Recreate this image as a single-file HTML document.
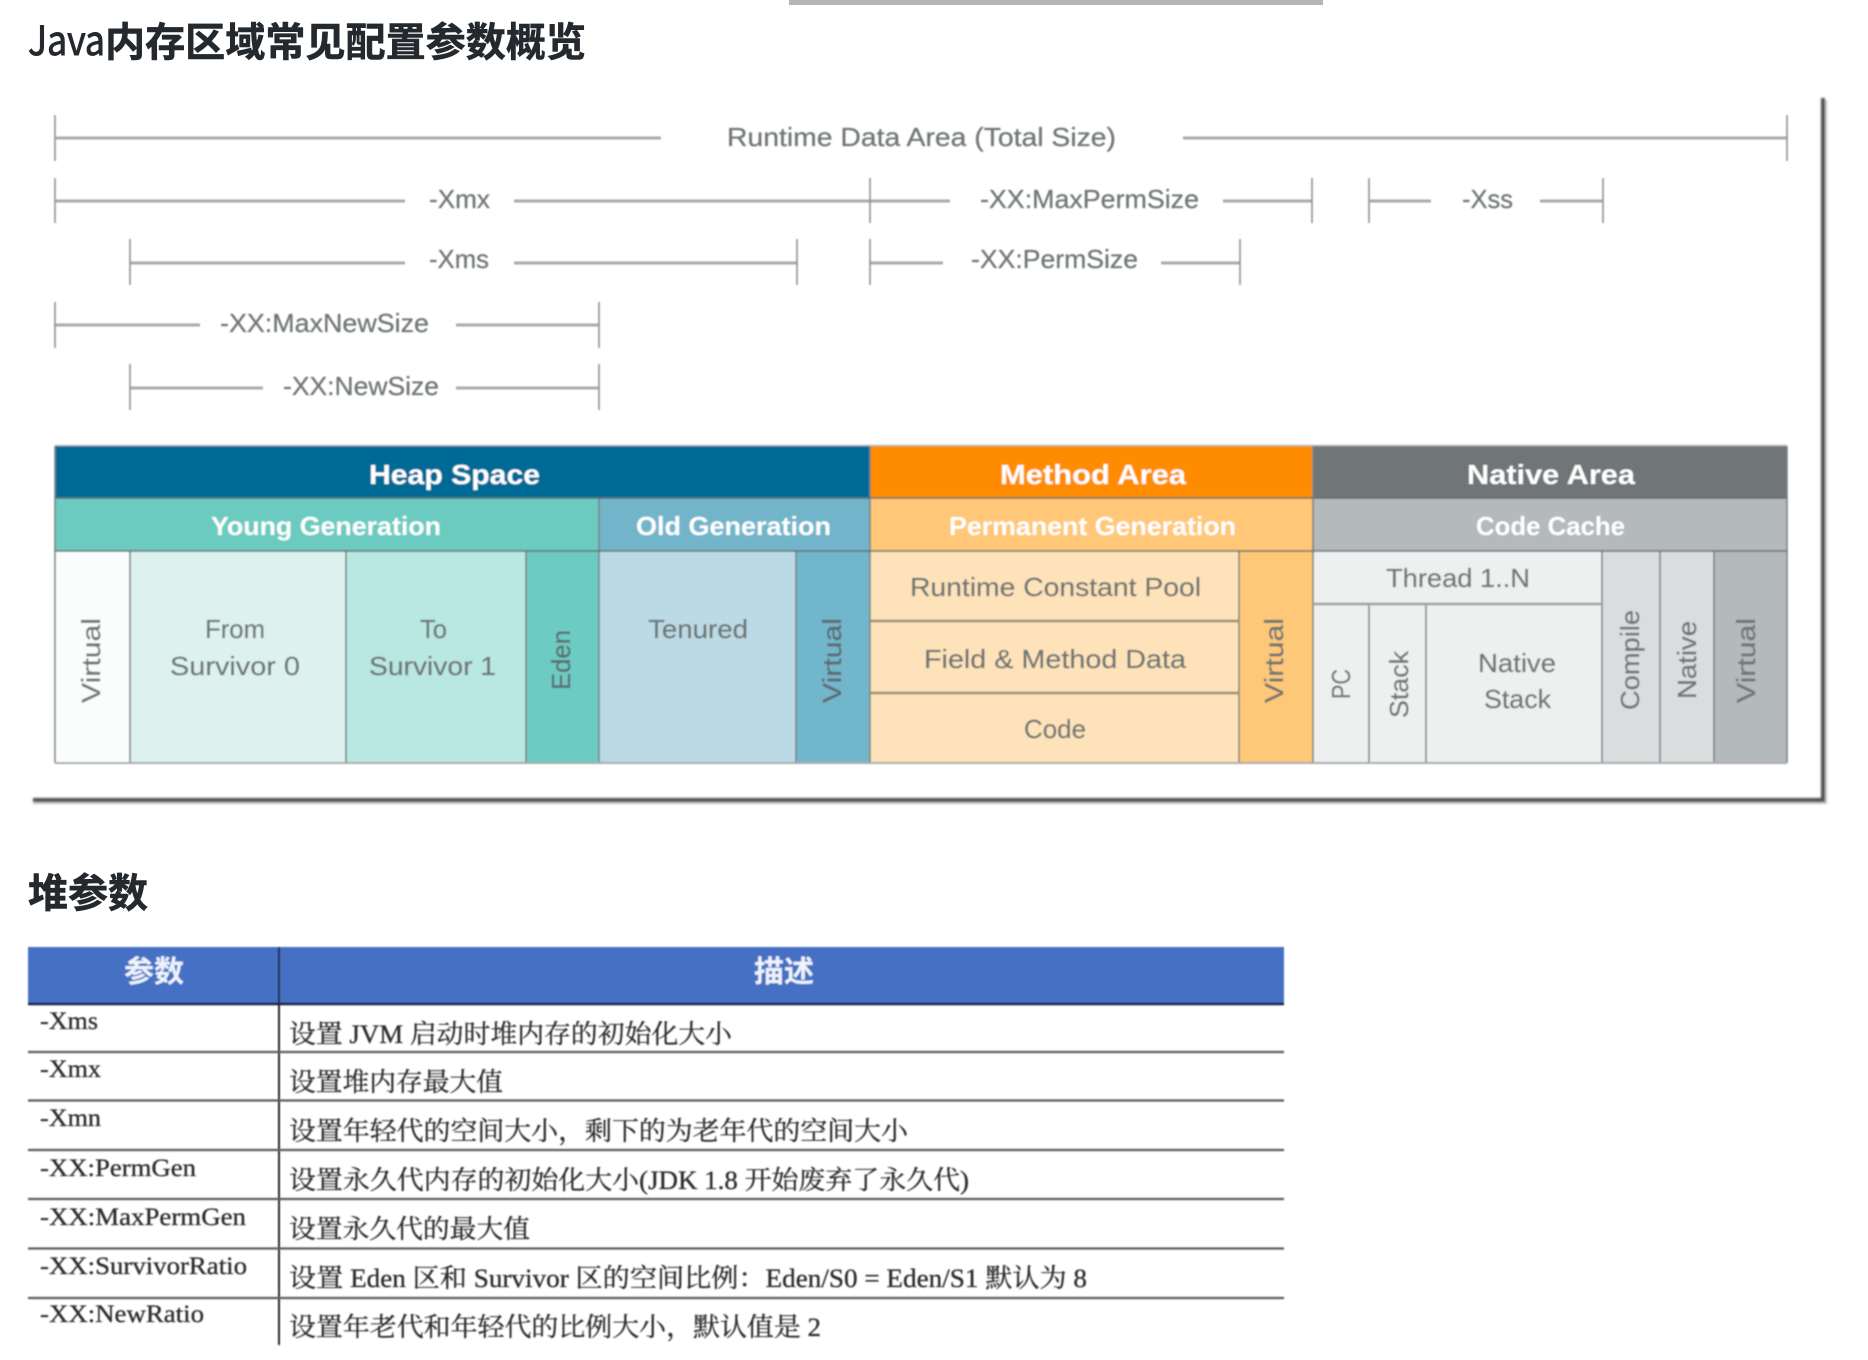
<!DOCTYPE html>
<html lang="zh">
<head>
<meta charset="utf-8">
<title>Java内存区域常见配置参数概览</title>
<style>
html,body{margin:0;padding:0;background:#fff;width:1868px;height:1360px;overflow:hidden}
svg{display:block;position:absolute;left:0;top:0}
.h{font-family:"Noto Sans CJK SC","Liberation Sans",sans-serif;font-weight:700;fill:#24292e;stroke:#24292e;stroke-width:.6px}
.d text{font-family:"Liberation Sans",sans-serif;font-size:26px;fill:#6f7575;stroke:#6f7575;stroke-width:.25px}
.d text.w{font-weight:700;fill:#fff;stroke:none;font-size:28px}
.d text.w2{font-weight:700;fill:#fff;stroke:none;font-size:26px}
.d text.dk{fill:#5f6b6e;stroke:#5f6b6e}
.t text{font-family:"Liberation Serif","Noto Serif CJK SC",serif;fill:#2a2a2a;stroke:#2a2a2a;stroke-width:.3px}
.t text.c1{font-size:25px}
.t text.c2{font-size:26px;font-family:"Liberation Serif","Noto Serif CJK SC",serif}
.t text.hd{font-family:"Noto Sans CJK SC",sans-serif;font-weight:700;font-size:30px;fill:#eef3fb;stroke:none}
</style>
</head>
<body>
<svg width="1868" height="1360" viewBox="0 0 1868 1360" xmlns="http://www.w3.org/2000/svg">
<defs>
<filter id="b" x="-2%" y="-2%" width="104%" height="104%"><feGaussianBlur stdDeviation="0.7"/></filter>
<filter id="s" x="-5%" y="-5%" width="110%" height="110%"><feGaussianBlur stdDeviation="1.1"/></filter>
</defs>
<rect x="789" y="0" width="534" height="5" fill="#b5b5b7"/>
<text class="h" x="28" y="55" font-size="40" style="font-weight:400;stroke-width:.9px" textLength="77" lengthAdjust="spacingAndGlyphs">Java</text>
<text class="h" x="105" y="56" font-size="40" textLength="481" lengthAdjust="spacingAndGlyphs">内存区域常见配置参数概览</text>
<text class="h" x="28" y="907" font-size="40" textLength="120" lengthAdjust="spacingAndGlyphs">堆参数</text>

<g filter="url(#s)">
<path d="M1823 98V800H33" fill="none" stroke="#4a4d4f" stroke-width="4"/>
<path d="M1826 100V803H33" fill="none" stroke="#c4c5c6" stroke-width="2"/>
</g>

<g class="d" filter="url(#b)">
<g fill="none" stroke="#a9abab" stroke-width="3">
<path d="M55 138H661M1183 138H1787"/>
<path d="M55 201H405M514 201H950M1223 201H1312M1369 201H1431M1540 201H1603"/>
<path d="M130 263H405M514 263H797M870 263H943M1161 263H1240"/>
<path d="M55 325H200M456 325H599"/>
<path d="M130 388H263M456 388H599"/>
</g>
<g fill="none" stroke="#8f9292" stroke-width="1.6">
<path d="M55 115V161M1787 115V161"/>
<path d="M55 178V223M870 178V223M1312 178V223M1369 178V223M1603 178V223"/>
<path d="M130 239V285M797 239V285M870 239V285M1240 239V285"/>
<path d="M55 302V348M599 302V348"/>
<path d="M130 364V410M599 364V410"/>
</g>
<text x="727" y="146" textLength="389" lengthAdjust="spacingAndGlyphs">Runtime Data Area (Total Size)</text>
<text x="429" y="208" textLength="61" lengthAdjust="spacingAndGlyphs">-Xmx</text>
<text x="980" y="208" textLength="219" lengthAdjust="spacingAndGlyphs">-XX:MaxPermSize</text>
<text x="1462" y="208" textLength="51" lengthAdjust="spacingAndGlyphs">-Xss</text>
<text x="429" y="268" textLength="60" lengthAdjust="spacingAndGlyphs">-Xms</text>
<text x="971" y="268" textLength="167" lengthAdjust="spacingAndGlyphs">-XX:PermSize</text>
<text x="220" y="332" textLength="209" lengthAdjust="spacingAndGlyphs">-XX:MaxNewSize</text>
<text x="283" y="395" textLength="156" lengthAdjust="spacingAndGlyphs">-XX:NewSize</text>

<!-- top bars -->
<rect x="55" y="446" width="815" height="52" fill="#006b96"/>
<rect x="870" y="446" width="443" height="52" fill="#ff8c00"/>
<rect x="1313" y="446" width="474" height="52" fill="#6f7678"/>
<rect x="55" y="498" width="544" height="53" fill="#6ccbc0"/>
<rect x="599" y="498" width="271" height="53" fill="#72b5cb"/>
<rect x="870" y="498" width="443" height="53" fill="#ffc777"/>
<rect x="1313" y="498" width="474" height="53" fill="#b4b9bb"/>
<!-- cells -->
<rect x="55" y="551" width="75" height="212" fill="#fbfdfd"/>
<rect x="130" y="551" width="216" height="212" fill="#ddf2ef"/>
<rect x="346" y="551" width="180" height="212" fill="#b9e7e1"/>
<rect x="526" y="551" width="73" height="212" fill="#6ccbc3"/>
<rect x="599" y="551" width="197" height="212" fill="#bbdae5"/>
<rect x="796" y="551" width="74" height="212" fill="#72b6cc"/>
<rect x="870" y="551" width="369" height="212" fill="#fee3ba"/>
<rect x="1239" y="551" width="74" height="212" fill="#ffc878"/>
<rect x="1313" y="551" width="289" height="212" fill="#eef0f0"/>
<rect x="1602" y="551" width="112" height="212" fill="#dadcde"/>
<rect x="1714" y="551" width="73" height="212" fill="#b4b9bb"/>
<!-- cell borders -->
<g fill="none" stroke="#7b8386" stroke-width="1.6">
<path d="M55 446V763M130 551V763M346 551V763M526 551V763M599 498V763M796 551V763M870 446V763M1239 551V763M1313 446V763M1369 604V763M1426 604V763M1602 551V763M1660 551V763M1714 551V763M1787 446V763"/>
</g>
<path d="M55 498H1787M55 551H1787" fill="none" stroke="#60696c" stroke-opacity=".7" stroke-width="2"/>
<path d="M870 621H1239M870 693H1239" fill="none" stroke="#9a8e78" stroke-width="2.4"/>
<path d="M1313 604H1602" fill="none" stroke="#9ba0a2" stroke-width="2.6"/>
<path d="M55 763H1787" fill="none" stroke="#a9adae" stroke-width="2"/>
<path d="M55 445.5H1787" fill="none" stroke="#b9bdbe" stroke-width="1.5"/>

<text class="w" x="369" y="484" textLength="171" lengthAdjust="spacingAndGlyphs">Heap Space</text>
<text class="w" x="1000" y="484" textLength="186" lengthAdjust="spacingAndGlyphs">Method Area</text>
<text class="w" x="1467" y="484" textLength="168" lengthAdjust="spacingAndGlyphs">Native Area</text>
<text class="w2" x="211" y="535" textLength="230" lengthAdjust="spacingAndGlyphs">Young Generation</text>
<text class="w2" x="636" y="535" textLength="195" lengthAdjust="spacingAndGlyphs">Old Generation</text>
<text class="w2" x="949" y="535" textLength="287" lengthAdjust="spacingAndGlyphs">Permanent Generation</text>
<text class="w2" x="1476" y="535" textLength="149" lengthAdjust="spacingAndGlyphs">Code Cache</text>

<text x="205" y="638" textLength="60" lengthAdjust="spacingAndGlyphs">From</text>
<text x="170" y="675" textLength="130" lengthAdjust="spacingAndGlyphs">Survivor 0</text>
<text x="420" y="638" textLength="27" lengthAdjust="spacingAndGlyphs">To</text>
<text x="369" y="675" textLength="127" lengthAdjust="spacingAndGlyphs">Survivor 1</text>
<text x="648" y="638" textLength="100" lengthAdjust="spacingAndGlyphs">Tenured</text>
<text x="910" y="596" textLength="291" lengthAdjust="spacingAndGlyphs">Runtime Constant Pool</text>
<text x="924" y="668" textLength="262" lengthAdjust="spacingAndGlyphs">Field &amp; Method Data</text>
<text x="1024" y="738" textLength="62" lengthAdjust="spacingAndGlyphs">Code</text>
<text x="1386" y="587" textLength="144" lengthAdjust="spacingAndGlyphs">Thread 1..N</text>
<text x="1478" y="672" textLength="78" lengthAdjust="spacingAndGlyphs">Native</text>
<text x="1484" y="708" textLength="67" lengthAdjust="spacingAndGlyphs">Stack</text>

<text transform="translate(100 703) rotate(-90)" textLength="85" lengthAdjust="spacingAndGlyphs">Virtual</text>
<text class="dk" transform="translate(570 690) rotate(-90)" textLength="60" lengthAdjust="spacingAndGlyphs">Eden</text>
<text class="dk" transform="translate(841 703) rotate(-90)" textLength="85" lengthAdjust="spacingAndGlyphs">Virtual</text>
<text transform="translate(1283 703) rotate(-90)" textLength="85" lengthAdjust="spacingAndGlyphs">Virtual</text>
<text transform="translate(1350 699) rotate(-90)" textLength="30" lengthAdjust="spacingAndGlyphs">PC</text>
<text transform="translate(1408 718) rotate(-90)" textLength="67" lengthAdjust="spacingAndGlyphs">Stack</text>
<text transform="translate(1639 710) rotate(-90)" textLength="100" lengthAdjust="spacingAndGlyphs">Compile</text>
<text transform="translate(1696 699) rotate(-90)" textLength="78" lengthAdjust="spacingAndGlyphs">Native</text>
<text transform="translate(1755 703) rotate(-90)" textLength="85" lengthAdjust="spacingAndGlyphs">Virtual</text>
</g>

<g class="t" filter="url(#b)">
<rect x="28" y="947" width="1256" height="57" fill="#4470c4" stroke="none"/>
<path d="M28 1004H1284" stroke="#14233f" stroke-width="2.4" fill="none"/>
<path d="M279 947V1345" stroke="#23272e" stroke-width="2" fill="none"/>
<path d="M28 1052H1284M28 1100.5H1284M28 1150H1284M28 1199H1284M28 1248.5H1284M28 1298H1284" stroke="#5c5c5c" stroke-width="2.2" fill="none"/>
<text class="hd" x="124" y="982" textLength="60" lengthAdjust="spacingAndGlyphs">参数</text>
<text class="hd" x="754" y="982" textLength="60" lengthAdjust="spacingAndGlyphs">描述</text>

<text class="c1" x="40" y="1029" textLength="58" lengthAdjust="spacingAndGlyphs">-Xms</text>
<text class="c1" x="40" y="1077" textLength="61" lengthAdjust="spacingAndGlyphs">-Xmx</text>
<text class="c1" x="40" y="1126" textLength="61" lengthAdjust="spacingAndGlyphs">-Xmn</text>
<text class="c1" x="40" y="1176" textLength="156" lengthAdjust="spacingAndGlyphs">-XX:PermGen</text>
<text class="c1" x="40" y="1225" textLength="206" lengthAdjust="spacingAndGlyphs">-XX:MaxPermGen</text>
<text class="c1" x="40" y="1274" textLength="207" lengthAdjust="spacingAndGlyphs">-XX:SurvivorRatio</text>
<text class="c1" x="40" y="1322" textLength="164" lengthAdjust="spacingAndGlyphs">-XX:NewRatio</text>

<text class="c2" x="289" y="1043" textLength="443" lengthAdjust="spacingAndGlyphs">设置 JVM 启动时堆内存的初始化大小</text>
<text class="c2" x="289" y="1091" textLength="214" lengthAdjust="spacingAndGlyphs">设置堆内存最大值</text>
<text class="c2" x="289" y="1140" textLength="619" lengthAdjust="spacingAndGlyphs">设置年轻代的空间大小，剩下的为老年代的空间大小</text>
<text class="c2" x="289" y="1189" textLength="680" lengthAdjust="spacingAndGlyphs">设置永久代内存的初始化大小(JDK 1.8 开始废弃了永久代)</text>
<text class="c2" x="289" y="1238" textLength="241" lengthAdjust="spacingAndGlyphs">设置永久代的最大值</text>
<text class="c2" x="289" y="1287" textLength="798" lengthAdjust="spacingAndGlyphs">设置 Eden 区和 Survivor 区的空间比例：Eden/S0 = Eden/S1  默认为 8</text>
<text class="c2" x="289" y="1336" textLength="532" lengthAdjust="spacingAndGlyphs">设置年老代和年轻代的比例大小，默认值是 2</text>
</g>
</svg>
</body>
</html>
